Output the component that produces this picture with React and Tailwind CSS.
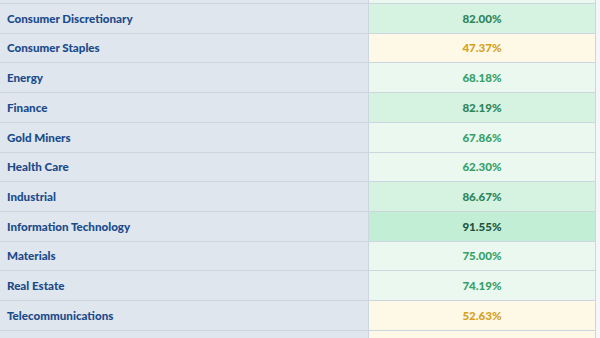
import React from 'react';

const rows = [
	{ name: '', value: '', tier: 'light' },
	{ name: 'Consumer Discretionary', value: '82.00%', tier: 'mid' },
	{ name: 'Consumer Staples', value: '47.37%', tier: 'warn' },
	{ name: 'Energy', value: '68.18%', tier: 'light' },
	{ name: 'Finance', value: '82.19%', tier: 'mid' },
	{ name: 'Gold Miners', value: '67.86%', tier: 'light' },
	{ name: 'Health Care', value: '62.30%', tier: 'light' },
	{ name: 'Industrial', value: '86.67%', tier: 'mid' },
	{ name: 'Information Technology', value: '91.55%', tier: 'high' },
	{ name: 'Materials', value: '75.00%', tier: 'light' },
	{ name: 'Real Estate', value: '74.19%', tier: 'light' },
	{ name: 'Telecommunications', value: '52.63%', tier: 'warn' },
	{ name: '', value: '', tier: 'warn' },
]

const tierStyles = {
	light: 'bg-[#eaf8f0] text-[#38a169]',
	mid: 'bg-[#d6f3e2] text-[#2f855a]',
	high: 'bg-[#c2eed6] text-[#22543d]',
	warn: 'bg-[#fef8e7] text-[#d4a21e]',
}

const App = () => {
	return (
		<div className="h-[338px] w-[600px] overflow-hidden bg-[#f4f6f9]" style={{ fontFamily: 'Lato, "Open Sans", sans-serif' }}>
			<div className="-mt-[25.73px] w-[596px] border-r border-[#cdd6e0]">
				{rows.map((row, i) => (
					<div key={i} className="flex h-[29.73px] border-b border-[#cdd6e0] text-[11.6px] font-black">
						<div className="flex w-[369px] items-center border-r border-[#cdd6e0] bg-[#dfe6ee] pl-[7px] text-[#1b4b8a]">
							{row.name}
						</div>
						<div className={"flex flex-1 items-center justify-center " + tierStyles[row.tier]}>
							{row.value}
						</div>
					</div>
				))}
			</div>
		</div>
	);
};

export default App;
